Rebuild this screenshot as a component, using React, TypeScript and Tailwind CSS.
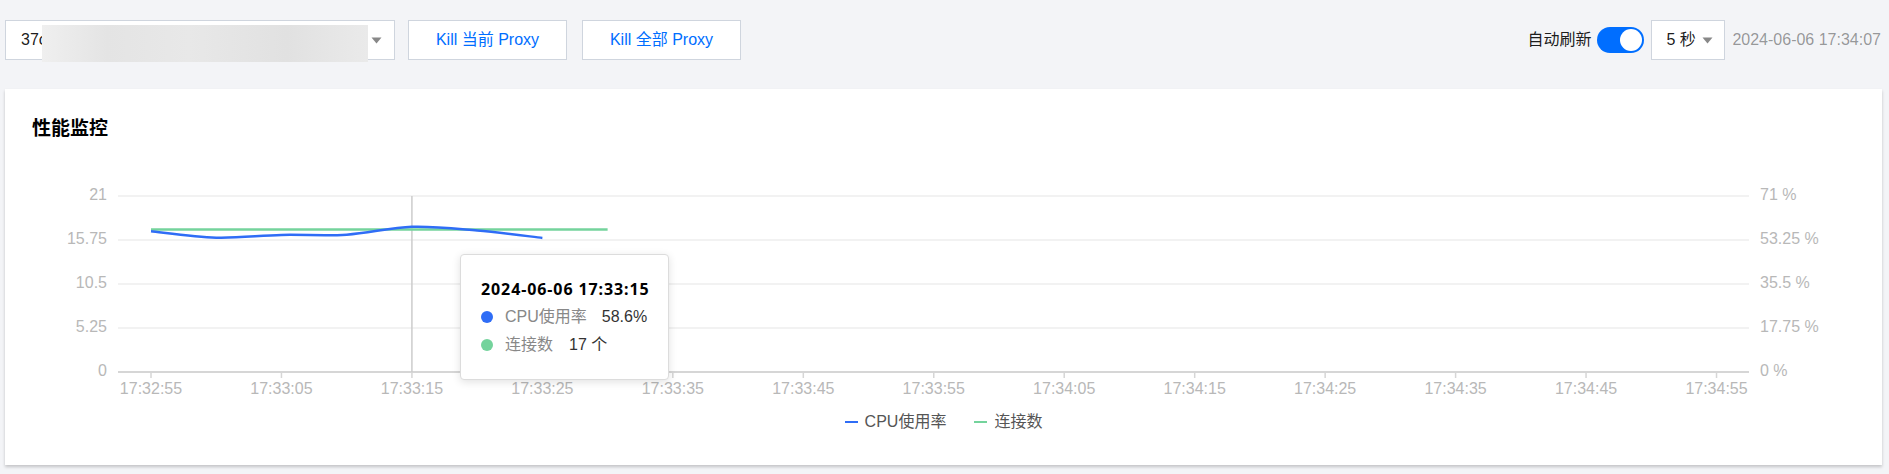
import React from 'react';

const FONT = '"Liberation Sans", "Noto Sans CJK SC", Arial, sans-serif';

// chart geometry (svg coords, relative to card)
const X0 = 146;
const STEP = 65.23; // px per 5s
const TOP = 16;
const BOTTOM = 192;
const PLOT_L = 113;
const PLOT_R = 1744;

const cpuData = [56.8, 54.2, 55.3, 55.4, 58.6, 57.1, 54.1];
const connData = [17, 17, 17, 17, 17, 17, 17, 17];

const leftTicks = ['21', '15.75', '10.5', '5.25', '0'];
const rightTicks = ['71 %', '53.25 %', '35.5 %', '17.75 %', '0 %'];
const timeLabels = [
  '17:32:55', '17:33:05', '17:33:15', '17:33:25', '17:33:35', '17:33:45', '17:33:55',
  '17:34:05', '17:34:15', '17:34:25', '17:34:35', '17:34:45', '17:34:55',
];

const yCpu = (v: number) => BOTTOM - (v / 71) * (BOTTOM - TOP);
const yConn = (v: number) => BOTTOM - (v / 21) * (BOTTOM - TOP);

function smoothPath(pts: [number, number][]) {
  let d = `M${pts[0][0]},${pts[0][1]}`;
  for (let i = 0; i < pts.length - 1; i++) {
    const p0 = pts[i - 1] || pts[i];
    const p1 = pts[i];
    const p2 = pts[i + 1];
    const p3 = pts[i + 2] || p2;
    const c1x = p1[0] + (p2[0] - p0[0]) / 6;
    const c1y = p1[1] + (p2[1] - p0[1]) / 6;
    const c2x = p2[0] - (p3[0] - p1[0]) / 6;
    const c2y = p2[1] - (p3[1] - p1[1]) / 6;
    d += ` C${c1x},${c1y} ${c2x},${c2y} ${p2[0]},${p2[1]}`;
  }
  return d;
}

function Caret() {
  return (
    <svg width="11" height="7" viewBox="0 0 11 7">
      <path d="M0.5 0.5 L10.5 0.5 L5.5 6.5 Z" fill="#888" />
    </svg>
  );
}

function TopBar() {
  return (
    <div className="flex items-center justify-between h-[40px] pl-[5px] pr-[8px]">
      <div className="flex items-center">
        {/* proxy select */}
        <div className="relative w-[390px] h-[40px] bg-white border border-[#cfd5de] flex items-center pl-[15px] pr-[12px]">
          <span className="text-[16px] text-[#000000e6]">37c</span>
          <div className="absolute left-[36px] top-[4px] w-[326px] h-[37px] bg-[linear-gradient(90deg,#efefef_0%,#e4e4e4_20%,#e8e8e8_45%,#e1e1e1_75%,#eaeaea_100%)]" />
          <div className="ml-auto flex">
            <Caret />
          </div>
        </div>
        <button className="ml-[13px] w-[159px] h-[40px] bg-white border border-[#cfd5de] text-[16px] text-[#006eff]">
          Kill 当前 Proxy
        </button>
        <button className="ml-[15px] w-[159px] h-[40px] bg-white border border-[#cfd5de] text-[16px] text-[#006eff]">
          Kill 全部 Proxy
        </button>
      </div>
      <div className="flex items-center">
        <span className="text-[16px] text-[#000000e6]">自动刷新</span>
        <div className="ml-[6px] w-[47px] h-[26px] rounded-full bg-[#006eff] flex items-center justify-end pr-[2px]">
          <div className="w-[22px] h-[22px] rounded-full bg-white" />
        </div>
        <div className="ml-[7px] w-[74px] h-[40px] bg-white border border-[#cfd5de] flex items-center pl-[14px] pr-[11px]">
          <span className="text-[16px] text-[#000000e6]">5 秒</span>
          <div className="ml-auto flex">
            <Caret />
          </div>
        </div>
        <span className="ml-[7px] text-[16px] text-[#00000066]">2024-06-06 17:34:07</span>
      </div>
    </div>
  );
}

function Chart() {
  const cpuPts = cpuData.map((v, i) => [X0 + i * STEP, yCpu(v)] as [number, number]);
  const connPts = connData.map((v, i) => [X0 + i * STEP, yConn(v)] as [number, number]);
  const gridYs = [0, 1, 2, 3, 4].map((i) => TOP + i * 44);

  return (
    <div className="relative mt-[39px] h-[225px]">
      <svg width="1877" height="225" className="block" style={{ fontFamily: FONT }}>
        {gridYs.slice(0, 4).map((y) => (
          <line key={y} x1={PLOT_L} x2={PLOT_R} y1={y} y2={y} stroke="#eeeeee" strokeWidth="1.5" />
        ))}
        <line x1={PLOT_L} x2={PLOT_R} y1={BOTTOM} y2={BOTTOM} stroke="#d6d6d6" strokeWidth="2" />
        {gridYs.map((y, i) => (
          <text key={'l' + i} x="102" y={y} textAnchor="end" dominantBaseline="middle" fontSize="16" fill="#b8b8b8">
            {leftTicks[i]}
          </text>
        ))}
        {gridYs.map((y, i) => (
          <text key={'r' + i} x="1755" y={y} dominantBaseline="middle" fontSize="16" fill="#b8b8b8">
            {rightTicks[i]}
          </text>
        ))}
        {timeLabels.map((t, i) => {
          const x = X0 + i * STEP * 2;
          return (
            <g key={t}>
              <line x1={x} x2={x} y1={BOTTOM} y2={BOTTOM + 6} stroke="#d6d6d6" strokeWidth="1.5" />
              <text x={x} y="210" textAnchor="middle" dominantBaseline="middle" fontSize="16" fill="#b8b8b8">
                {t}
              </text>
            </g>
          );
        })}
        {/* crosshair */}
        <line x1={X0 + 4 * STEP} x2={X0 + 4 * STEP} y1={TOP} y2={BOTTOM} stroke="#cccccc" strokeWidth="1.5" />
        <path d={smoothPath(connPts)} fill="none" stroke="#74d39c" strokeWidth="2.5" />
        <path d={smoothPath(cpuPts)} fill="none" stroke="#2f6df6" strokeWidth="2.5" />
      </svg>

      {/* tooltip */}
      <div className="absolute left-[455px] top-[74px] w-[209px] h-[126px] bg-white border border-[#dcdcdc] rounded-[4px] shadow-[0_2px_8px_rgba(0,0,0,0.12)] pl-[20px] pt-[22px]">
        <div className="text-[16px] leading-[24px] font-bold text-black tracking-[0.9px]" style={{ fontFamily: '"Noto Sans", "Noto Sans CJK SC", sans-serif' }}>
          2024-06-06 17:33:15
        </div>
        <div className="mt-[2px] flex items-center h-[28px] text-[16px]">
          <span className="w-[12px] h-[12px] rounded-full bg-[#2f6df6]" />
          <span className="ml-[12px] text-[#888888]">CPU使用率</span>
          <span className="ml-[15px] text-[#333333]">58.6%</span>
        </div>
        <div className="flex items-center h-[28px] text-[16px]">
          <span className="w-[12px] h-[12px] rounded-full bg-[#74d39c]" />
          <span className="ml-[12px] text-[#888888]">连接数</span>
          <span className="ml-[16px] text-[#333333]">17 个</span>
        </div>
      </div>
    </div>
  );
}

function Legend() {
  return (
    <div className="mt-[7px] flex items-center justify-center h-[20px] text-[16px] text-[#555555]">
      <span className="w-[13px] h-[2px] bg-[#2f6df6]" />
      <span className="ml-[7px]">CPU使用率</span>
      <span className="ml-[28px] w-[13px] h-[2px] bg-[#74d39c]" />
      <span className="ml-[7px]">连接数</span>
    </div>
  );
}

export default function App() {
  return (
    <div className="w-[1889px] h-[474px] bg-[#f3f4f7] pt-[20px] overflow-hidden" style={{ fontFamily: FONT }}>
      <TopBar />
      <div className="mt-[29px] ml-[5px] w-[1877px] h-[376px] bg-white shadow-[0_2px_3px_rgba(0,0,0,0.2)] pt-[28px]">
        <h2 className="pl-[27px] text-[19px] leading-[24px] font-bold text-black">性能监控</h2>
        <Chart />
        <Legend />
      </div>
    </div>
  );
}
